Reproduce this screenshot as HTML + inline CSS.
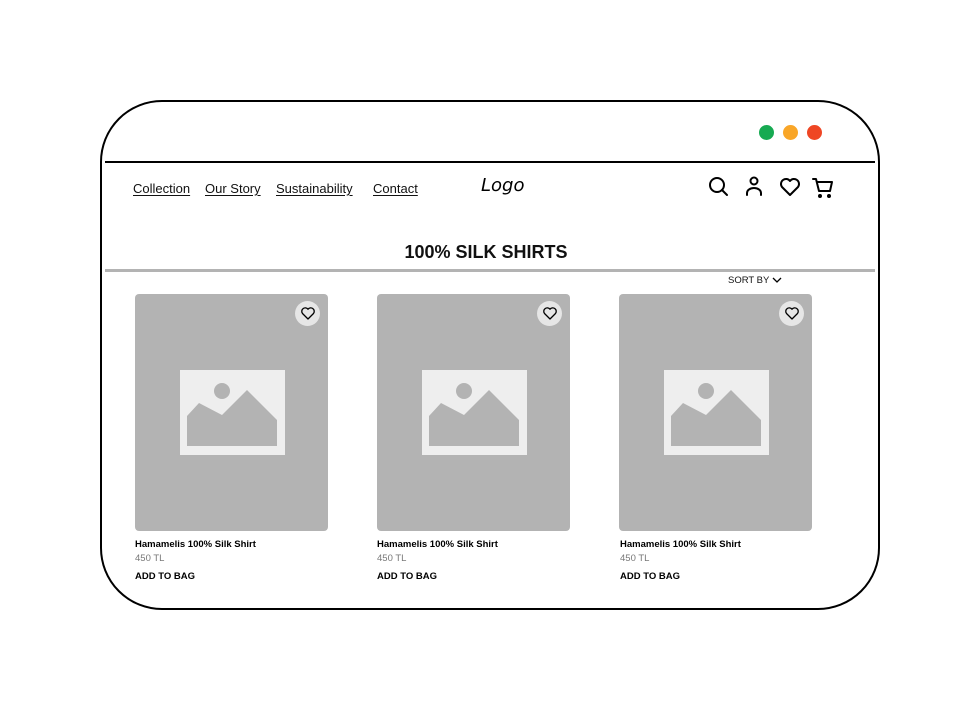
<!DOCTYPE html>
<html><head><style>
body{margin:0;width:980px;height:711px;background:#fff;position:relative;overflow:hidden;font-family:"Liberation Sans",sans-serif;}
.frame{position:absolute;left:100px;top:100px;width:776px;height:506px;border:2px solid #000;border-radius:62px;}
.dot{position:absolute;top:125px;width:15px;height:15px;border-radius:50%;}
.hline{position:absolute;left:105px;width:770px;}
.nav{position:absolute;top:181px;font-size:13px;color:#111;text-decoration:underline;text-underline-offset:2px;}
.card{position:absolute;top:294px;width:193px;height:237px;background:#b3b3b3;border-radius:4px;}
.fav{position:absolute;right:8px;top:7px;width:25px;height:25px;border-radius:50%;background:#e6e6e6;}
.t{position:absolute;font-size:9.5px;}
</style></head><body>
<div class="frame"></div>
<div class="dot" style="left:759px;background:#17aa52"></div>
<div class="dot" style="left:783px;background:#f9a628"></div>
<div class="dot" style="left:807px;background:#ef4624"></div>
<div class="hline" style="top:161px;height:2px;background:#000"></div>
<div class="hline" style="top:269px;height:3px;background:#b3b3b3"></div>
<span class="nav" style="left:133px">Collection</span>
<span class="nav" style="left:205px">Our Story</span>
<span class="nav" style="left:276px">Sustainability</span>
<span class="nav" style="left:373px">Contact</span>
<span style="position:absolute;left:481px;top:175px;font-size:18px;font-style:italic;font-family:'DejaVu Sans',sans-serif;font-weight:200;">Logo</span>
<svg style="position:absolute;left:700px;top:172px" width="140" height="30" viewBox="0 0 140 30" fill="none" stroke="#000" stroke-width="2" stroke-linecap="round" stroke-linejoin="round">
<circle cx="17" cy="13" r="7"/><path d="M22 18l5 5"/>
<circle cx="54" cy="9" r="3.5"/><path d="M47 23v-2a7 5 0 0 1 14 0v2"/>
<path d="M90 23l-8-8a5 5 0 0 1 8-6a5 5 0 0 1 8 6z"/>
<path d="M113 7h3l3 12h11l2-9h-15"/><circle cx="120" cy="24" r="1" fill="#000"/><circle cx="129" cy="24" r="1" fill="#000"/>
</svg>
<div style="position:absolute;left:0;width:972px;top:242px;text-align:center;font-size:18px;font-weight:bold;color:#111">100% SILK SHIRTS</div>
<span class="t" style="left:728px;top:275px;color:#111">SORT BY</span>
<svg style="position:absolute;left:772px;top:276px" width="10" height="8"><path d="M1 2l4 4 4-4" stroke="#000" stroke-width="1.3" fill="none"/></svg>

<div class="card" style="left:135px"><div class="fav"></div></div>
<div class="card" style="left:377px"><div class="fav"></div></div>
<div class="card" style="left:619px"><div class="fav"></div></div>

<svg style="position:absolute;left:0;top:0" width="980" height="711">
<defs><g id="ph">
<rect x="45" y="76" width="105" height="85" fill="#eeeeee"/>
<circle cx="87" cy="97" r="8" fill="#b3b3b3"/>
<path d="M52 152V122L64 109L87 121L112 96L142 126V152Z" fill="#b3b3b3"/>
<path d="M173 25l-5.5-5.5a3.3 3.3 0 0 1 5.5-4.3a3.3 3.3 0 0 1 5.5 4.3z" fill="none" stroke="#000" stroke-width="1.3" stroke-linejoin="round"/>
</g></defs>
<use href="#ph" x="135" y="294"/>
<use href="#ph" x="377" y="294"/>
<use href="#ph" x="619" y="294"/>
</svg>

<span class="t" style="left:135px;top:539px;font-weight:bold">Hamamelis 100% Silk Shirt</span>
<span class="t" style="left:135px;top:553px;color:#777">450 TL</span>
<span class="t" style="left:135px;top:571px;font-weight:bold">ADD TO BAG</span>
<span class="t" style="left:377px;top:539px;font-weight:bold">Hamamelis 100% Silk Shirt</span>
<span class="t" style="left:377px;top:553px;color:#777">450 TL</span>
<span class="t" style="left:377px;top:571px;font-weight:bold">ADD TO BAG</span>
<span class="t" style="left:620px;top:539px;font-weight:bold">Hamamelis 100% Silk Shirt</span>
<span class="t" style="left:620px;top:553px;color:#777">450 TL</span>
<span class="t" style="left:620px;top:571px;font-weight:bold">ADD TO BAG</span>
</body></html>
